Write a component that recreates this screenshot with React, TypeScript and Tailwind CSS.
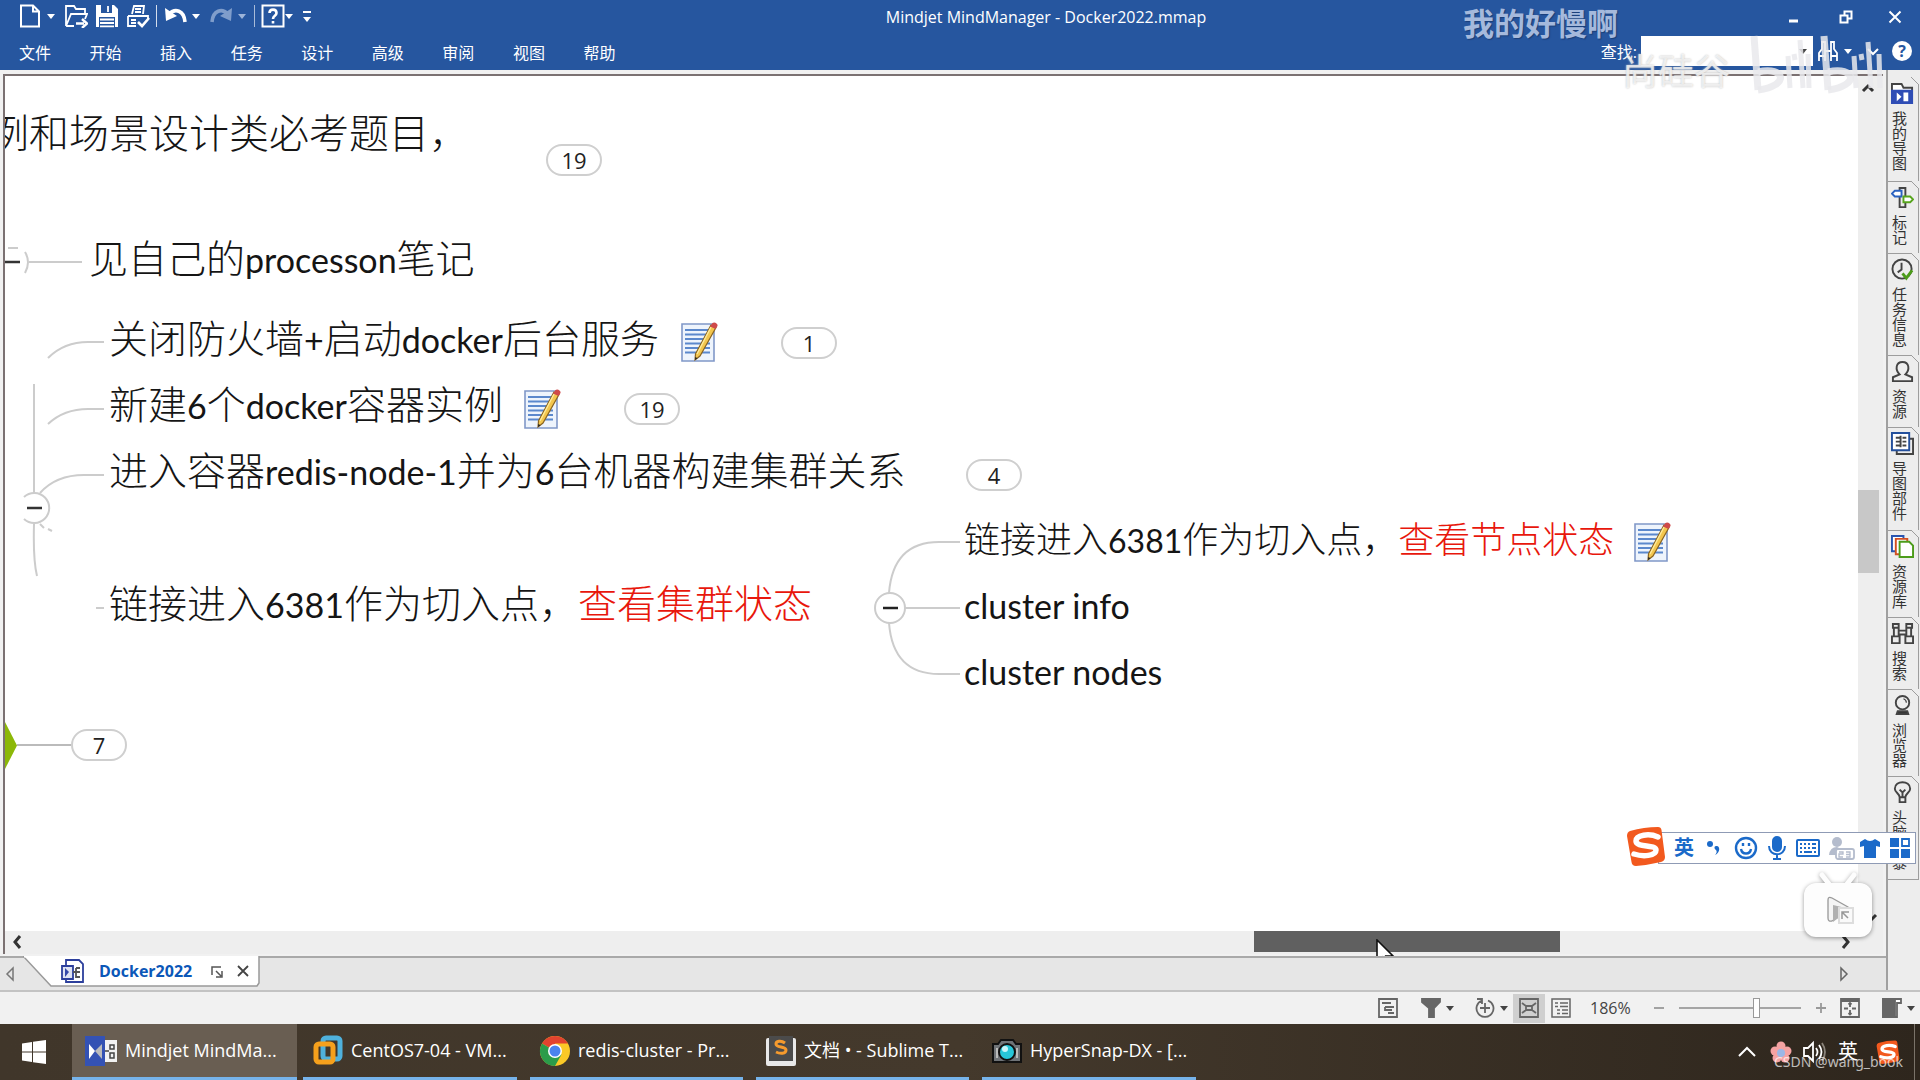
import type { ReactNode } from 'react';

const ui = "font-['Open_Sans','Noto_Sans_CJK_SC',sans-serif]";

const Caret = ({ className = '' }: { className?: string }) => (
  <svg className={`h-[5px] w-2 shrink-0 ${className}`} viewBox="0 0 8 5" fill="currentColor">
    <path d="M0 0h8L4 5z" />
  </svg>
);

const CaretButton = ({ label, className = '' }: { label: string; className?: string }) => (
  <button type="button" aria-label={label} className={`flex h-6 w-2 items-center ${className}`}>
    <Caret />
  </button>
);

type IconProps = { children: ReactNode; label: string; className?: string };

const IconButton = ({ children, label, className = '' }: IconProps) => (
  <button type="button" aria-label={label} className={`h-6 w-6 shrink-0 ${className}`}>
    <svg viewBox="0 0 24 24" className="h-6 w-6" fill="none" stroke="currentColor" strokeWidth="2">
      {children}
    </svg>
  </button>
);

const QuickAccess = () => (
  <div className="flex items-center pl-[18px]">
    <IconButton label="新建">
      <path d="M3 1.500h12l6 6v15H3zM15 1.500v6h6" />
    </IconButton>
    <CaretButton label="新建选项" className="ml-[5px]" />
    <IconButton label="打开" className="ml-[9px]">
      <path d="M2 22V2h8l2 3h9v5M2 22l5-12h16l-2 5M2 22h8" strokeWidth="1.800" />
      <path d="M12 19.500h8M18 15l5 4.500-5 4.500" strokeWidth="2.400" />
    </IconButton>
    <IconButton label="保存" className="ml-[7px]">
      <path d="M1 1h18l4 4v18H1z" fill="currentColor" stroke="none" />
      <path d="M6 1h11v8H6zM4 13h16v10H4z" fill="#26569f" stroke="none" />
      <path d="M13 2v6M5 15.500h14M5 19h14M5 22.300h14" strokeWidth="1.800" />
    </IconButton>
    <IconButton label="打印" className="ml-[7px]">
      <path d="M6 10l2-8h10l-1 8M9 5h6M9 8h6M2 12h20v3M2 12v10h8M5 16h5M5 19h5" strokeWidth="1.800" />
      <path d="M12 18l4 4 7-8" strokeWidth="2.600" />
    </IconButton>
    <span className="ml-[6px] h-[22px] w-px bg-white/80" />
    <IconButton label="撤销" className="ml-[7px]">
      <path d="M5 10c6-6 15-4 16 8" strokeWidth="3.600" />
      <path d="M1 4l1 13 11-5z" fill="currentColor" stroke="none" />
    </IconButton>
    <CaretButton label="撤销选项" className="ml-1" />
    <IconButton label="恢复" className="ml-[9px] text-[#7f9dcb]">
      <path d="M19 10C13 4 4 6 3 18" strokeWidth="3.600" />
      <path d="M23 4l-1 13-11-5z" fill="currentColor" stroke="none" />
    </IconButton>
    <CaretButton label="恢复选项" className="ml-[5px] text-[#9db4d9]" />
    <span className="ml-2 h-[22px] w-px bg-white/60" />
    <IconButton label="帮助主题" className="ml-[6px]">
      <path d="M1.500 1.500h21v21h-21z" />
      <path d="M8.500 9c0-4.500 7-4.500 7 0 0 3-3.500 2.500-3.500 6M12 17v2.500" strokeWidth="2.600" />
    </IconButton>
    <CaretButton label="帮助选项" />
    <button type="button" aria-label="自定义工具栏" className="ml-[10px] flex w-2 flex-col items-center gap-1">
      <span className="h-[2px] w-2 bg-white" />
      <Caret />
    </button>
  </div>
);

const menus = ['文件', '开始', '插入', '任务', '设计', '高级', '审阅', '视图', '帮助'];

const Header = () => (
  <header className="relative bg-[#26569f] text-white">
    <div className="flex h-8 items-center">
      <QuickAccess />
      <h1 className="flex-1 pt-[2px] text-center text-[16px] leading-6">Mindjet MindManager - Docker2022.mmap</h1>
      <div className="flex pt-[2px] pr-[13px]">
        <IconButton label="最小化">
          <path d="M8 16h9" strokeWidth="3" />
        </IconButton>
        <IconButton label="还原" className="ml-[29px]">
          <path d="M6.500 10.500h7v7h-7zM10.500 10V6.500h7v7H14" />
        </IconButton>
        <IconButton label="关闭" className="ml-[25px]">
          <path d="M6.500 6.500l11 11M17.500 6.500l-11 11" />
        </IconButton>
      </div>
    </div>
    <div className="flex h-[38px] items-center justify-between">
      <nav className="grid w-[654px] grid-cols-9 pt-[3px] pl-[19px] text-[16px] leading-5">
        {menus.map((menu) => (
          <button key={menu} type="button" className="text-left">
            {menu}
          </button>
        ))}
      </nav>
      <div className="flex items-center pr-2">
        <label htmlFor="find" className="pt-[2px] text-[16px] leading-5">
          查找:
        </label>
        <div className="ml-1 flex h-[30px] w-[172px] items-center bg-white pr-[6px] text-[#444]">
          <input id="find" type="text" className="w-full min-w-0 flex-1 px-1 text-[14px] outline-none" />
          <CaretButton label="查找历史" />
        </div>
        <IconButton label="查找选项" className="ml-[3px]">
          <path d="M3 22v-8l3-4V3h3v19M21 22v-8l-3-4V3h-3v19M9 12h6M3 17h6M15 17h6" strokeWidth="1.800" />
        </IconButton>
        <CaretButton label="查找更多" className="ml-1" />
        <IconButton label="折叠功能区" className="ml-[10px]">
          <path d="M6 10l5 5 5-5" />
        </IconButton>
        <button
          type="button"
          aria-label="帮助"
          className="ml-[6px] h-5 w-5 rounded-full bg-white text-center text-[16px] leading-5 font-bold text-[#26569f]"
        >
          ?
        </button>
      </div>
    </div>
    <p className="absolute top-0 right-[302px] text-[31px] leading-[46px] font-bold text-[#a5b9dc] [text-shadow:1px_1px_1px_#1b3f78]">
      我的好慢啊
    </p>
  </header>
);

const Watermark = () => (
  <div className="pointer-events-none absolute top-8 right-[34px] z-10 flex items-end gap-4">
    <p className="pb-1 text-[36px] leading-[40px] text-white/70 [text-shadow:0_0_2px_#bbb]">尚硅谷</p>
    <svg className="h-16 w-[140px]" viewBox="0 0 140 64" fill="none" stroke="#e9e9ec" strokeOpacity="0.85">
      <path d="M8 4l4 54" strokeWidth="7" />
      <path d="M12 40c28-6 32 14 0 18" strokeWidth="7" />
      <path d="M42 24l2 32M54 8l3 48M48 22l1 6M62 22l1 34" strokeWidth="5" />
      <path d="M78 4l4 54" strokeWidth="7" />
      <path d="M82 40c28-6 32 14 0 18" strokeWidth="7" />
      <path d="M108 24l2 32M122 10l3 46M115 22l1 6M133 22l1 34" strokeWidth="5" />
    </svg>
  </div>
);

const NoteIcon = ({ className }: { className: string }) => (
  <svg className={`absolute h-10 w-[37px] ${className}`} viewBox="0 0 37 40" fill="none">
    <path d="M1 2h32v37H1z" fill="#eef4fc" stroke="#8098c8" strokeWidth="1.600" />
    <path d="M4 8h25M4 12.500h25M4 17h25M4 21.500h25M4 26h25M4 30.500h25" stroke="#5b88cc" strokeWidth="1.800" />
    <path d="M30 3l5 2.500L19 34l-5 4 .5-6z" fill="#f3c64e" stroke="#8a6420" strokeWidth="1.200" />
    <path d="M30 5L16 32" stroke="#fdeb9c" strokeWidth="1.400" />
    <path d="M29 4.500l2.500-3.500c2-1.500 5.500.5 5 3L34.500 7z" fill="#cf4a4a" />
    <path d="M14.300 35L14 38l2.500-1.800z" fill="#222" />
  </svg>
);

const Badge = ({ count, className }: { count: number; className: string }) => (
  <button
    type="button"
    className={`absolute h-8 w-14 rounded-full border-2 border-[#cfcfcf] bg-white text-center font-['Open_Sans',sans-serif] text-[22px] leading-[26px] text-[#222] ${className}`}
  >
    {count}
  </button>
);

const Topic = ({ children, className }: { children: ReactNode; className: string }) => (
  <p className={`absolute h-12 leading-[48px] font-light whitespace-nowrap text-[#151515] ${className}`}>{children}</p>
);

const Latin = ({ children }: { children: string }) => <span className="text-[34px] font-normal">{children}</span>;

const Connectors = () => (
  <svg className="absolute top-0 left-0 h-[780px] w-[1000px]" viewBox="5 76 1000 780" fill="none" stroke="#cccccc" strokeWidth="2">
    <path d="M8 248h10M25 252q6 10 0 21M29 262h53" />
    <path d="M5 262h15" stroke="#333" strokeWidth="2.500" />
    <path d="M48 358q16-16 40-16h16M48 424q16-15 40-15h16M40 493q16-18 44-18h20" />
    <path d="M34 384v109M34 524q-1 36 3 52M40 524l4 4M48 529l4 2M96 608h8" />
    <path d="M24 497a15 15 0 1 1 0 22" />
    <path d="M27 508h15" stroke="#333" strokeWidth="2.500" />
    <path d="M889 593q4-51 50-51h21M905 608h55M889 623q4 51 50 51h21" />
    <circle cx="890" cy="608" r="15" fill="#fff" />
    <path d="M883 608h15" stroke="#222" strokeWidth="2.500" />
    <path d="M17 745h54" stroke="#bbb" />
    <path d="M5 722l12 23.500L5 769z" fill="#8cb808" stroke="none" />
  </svg>
);

const MapCanvas = () => (
  <section className="relative min-h-[760px] min-w-0 flex-1 overflow-hidden bg-white font-['Lato','Noto_Sans_CJK_SC',sans-serif] text-[39px]">
    <Connectors />
    <Topic className="top-[33px] -left-4 text-[40px]">例和场景设计类必考题目，</Topic>
    <Badge count={19} className="top-[68px] left-[541px]" />
    <Topic className="top-[158px] left-[84px]">
      见自己的<Latin>processon</Latin>笔记
    </Topic>
    <Topic className="top-[238px] left-[104px]">
      关闭防火墙<Latin>+</Latin>启动<Latin>docker</Latin>后台服务
    </Topic>
    <NoteIcon className="top-[246px] left-[676px]" />
    <Badge count={1} className="top-[251px] left-[776px]" />
    <Topic className="top-[304px] left-[104px]">
      新建<Latin>6</Latin>个<Latin>docker</Latin>容器实例
    </Topic>
    <NoteIcon className="top-[313px] left-[519px]" />
    <Badge count={19} className="top-[317px] left-[619px]" />
    <Topic className="top-[370px] left-[104px]">
      进入容器<Latin>redis-node-1</Latin>并为<Latin>6</Latin>台机器构建集群关系
    </Topic>
    <Badge count={4} className="top-[383px] left-[961px]" />
    <Topic className="top-[503px] left-[104px]">
      链接进入<Latin>6381</Latin>作为切入点，<span className="text-[#e8170c]">查看集群状态</span>
    </Topic>
    <Topic className="top-[439px] left-[959px] text-[36px]">
      链接进入<span className="text-[32px] font-normal">6381</span>作为切入点，
      <span className="text-[#e8170c]">查看节点状态</span>
    </Topic>
    <NoteIcon className="top-[446px] left-[1629px]" />
    <Topic className="top-[504px] left-[959px]">
      <Latin>cluster info</Latin>
    </Topic>
    <Topic className="top-[570px] left-[959px]">
      <Latin>cluster nodes</Latin>
    </Topic>
    <Badge count={7} className="top-[653px] left-[66px]" />
  </section>
);

const Arrow = ({ d, label }: { d: string; label: string }) => (
  <button type="button" aria-label={label} className="h-[22px] w-6 shrink-0">
    <svg className="h-[22px] w-6" viewBox="0 0 24 22" fill="none" stroke="#333" strokeWidth="3">
      <path d={d} />
    </svg>
  </button>
);

const VerticalScroll = () => (
  <div className="flex w-[25px] flex-col bg-[#eeeeee]">
    <Arrow label="向上滚动" d="M5 15l5-5 5 5" />
    <div className="flex-[392]" />
    <div className="h-[83px] w-[21px] bg-[#c8c8c8]" />
    <div className="flex-[336]" />
    <Arrow label="向下滚动" d="M8 6l5 5 5-5" />
  </div>
);

const HorizontalScroll = () => (
  <div className="flex h-[23px] items-start bg-[#eeeeee]">
    <Arrow label="向左滚动" d="M15 5l-5 6 5 6" />
    <div className="flex-[1223]" />
    <div className="relative h-[21px] w-[306px] bg-[#606060]">
      <svg className="absolute top-2 left-[122px] h-7 w-5" viewBox="0 0 20 28">
        <path d="M1 1v21l5-4 4 9 4-2-4-8h7z" fill="#fff" stroke="#111" strokeWidth="1.600" />
      </svg>
    </div>
    <div className="flex-[273]" />
    <Arrow label="向右滚动" d="M10 5l5 6-5 6" />
    <div className="w-[26px]" />
  </div>
);

const DocumentTabs = () => (
  <div className="relative flex h-[34px] border-t-2 border-[#a9a9a9] bg-[#e6e6e6]">
    <button type="button" aria-label="上一个标签" className="w-[23px]">
      <svg className="ml-1 h-4 w-3" viewBox="0 0 12 16" fill="none" stroke="#777" strokeWidth="1.500">
        <path d="M9 2v12L3 8z" />
      </svg>
    </button>
    <div className="relative -mt-[2px] flex h-[29px] w-[237px] items-center">
      <svg className="absolute top-0 left-0 h-[31px] w-[237px]" viewBox="0 0 237 31">
        <path d="M0 0l28 30h206l2-3V0" fill="#fff" stroke="#999" strokeWidth="1.500" />
        <path d="M1 0h234" stroke="#fff" strokeWidth="3" />
      </svg>
      <svg className="relative ml-[38px] h-6 w-6" viewBox="0 0 24 24" fill="none" stroke="#2c3f9c" strokeWidth="1.800">
        <path d="M5 7V1h13l4 4v18H5v-3" />
        <path d="M1 7h11v13H1z" fill="#dfe3f2" />
        <path d="M4 9l4 4-4 5z" fill="#3448a8" stroke="none" />
        <path d="M12 13h3M15 9h4M15 9v9h4M15 13h4" stroke="#555" />
      </svg>
      <a href="#docker2022" className="relative ml-[14px] text-[16px] leading-6 font-bold text-[#0b57b8]">
        Docker2022
      </a>
      <button type="button" aria-label="弹出" className="absolute top-[10px] left-[188px]">
        <svg className="h-3 w-3" viewBox="0 0 12 12" fill="none" stroke="#555" strokeWidth="1.500">
          <path d="M1 9V1h9M5 5l5 5M11 5v6H5" />
        </svg>
      </button>
      <button type="button" aria-label="关闭标签" className="absolute top-[9px] left-[214px]">
        <svg className="h-3 w-3" viewBox="0 0 12 12" stroke="#444" strokeWidth="1.800">
          <path d="M1 1l10 10M11 1L1 11" />
        </svg>
      </button>
    </div>
    <button type="button" aria-label="下一个标签" className="mr-9 ml-auto">
      <svg className="h-4 w-3" viewBox="0 0 12 16" fill="none" stroke="#666" strokeWidth="1.500">
        <path d="M3 2v12l6-6z" />
      </svg>
    </button>
  </div>
);

const sideTabs: { label: string; height: string; icon: ReactNode }[] = [
  {
    label: '我的导图',
    height: 'h-[104px]',
    icon: (
      <>
        <path d="M1 22V2h10l2 4h9v16z" fill="#fff" />
        <path d="M1 9h21v13H1z" fill="#2f4db5" stroke="#2f4db5" />
        <path d="M6 11v9l5-4.500zM13 11h5v9h-5z" fill="#fff" stroke="none" />
      </>
    ),
  },
  {
    label: '标记',
    height: 'h-[72px]',
    icon: (
      <>
        <path d="M9 2h6v20H9z" />
        <path d="M1 8l3-3h7v6H4z" fill="#fff" stroke="#2a62c0" />
        <path d="M23 14l-3-3h-7v6h7z" fill="#fff" stroke="#57a51d" />
      </>
    ),
  },
  {
    label: '任务信息',
    height: 'h-[102px]',
    icon: (
      <>
        <circle cx="11.500" cy="11.500" r="10" />
        <path d="M11 5v7l-4 3" />
        <path d="M12 16l4 5 6-8" stroke="#4c9c1a" strokeWidth="3" />
      </>
    ),
  },
  {
    label: '资源',
    height: 'h-[72px]',
    icon: <path d="M2 22v-4l7-3c-5-5-4-13 3-13s8 8 3 13l7 3v4z" />,
  },
  {
    label: '导图部件',
    height: 'h-[103px]',
    icon: (
      <>
        <path d="M19 7h4v16H6v-4" />
        <path d="M1 1h18v18H1z" fill="#fff" stroke="#24509c" />
        <path d="M5 6h4M5 10h4M5 14h4M12 6h4M12 10h4M12 14h4M10 4v12" />
      </>
    ),
  },
  {
    label: '资源库',
    height: 'h-[87px]',
    icon: (
      <>
        <path d="M1 1h12v16H1z" fill="#fff" stroke="#2a55b0" />
        <path d="M5 4h12v16H5z" fill="#fff" stroke="#d24f22" />
        <path d="M9 7h10l4 4v12H9z" fill="#fff" stroke="#4c9c1a" />
      </>
    ),
  },
  {
    label: '搜索',
    height: 'h-[72px]',
    icon: <path d="M2 2h6v4H2zM16 2h6v4h-6zM3 6v9M8 6v9M16 6v9M21 6v9M1 15h8v7H1zM15 15h8v7h-8zM8 9h8M8 13h8" />,
  },
  {
    label: '浏览器',
    height: 'h-[87px]',
    icon: (
      <>
        <circle cx="12" cy="9" r="7" />
        <path d="M13 5q3 1 3 4" strokeWidth="1.200" />
        <path d="M7 18h10l1 3H6z" fill="#333" />
      </>
    ),
  },
  {
    label: '头脑风暴',
    height: 'h-[103px]',
    icon: <path d="M9 17c0-4-5-5-5-9 0-9 16-9 16 0 0 4-5 5-5 9zM9 17v5h6v-5M9 9l3 3 3-3M12 12v5" />,
  },
];

const SidePanel = () => (
  <aside className="w-[34px] shrink-0 border-l-2 border-[#a0a0a0] bg-[#ededed] pt-2">
    {sideTabs.map(({ label, height, icon }) => (
      <button
        key={label}
        type="button"
        className={`relative flex w-[31px] flex-col items-start gap-[6px] border-r border-b border-[#9d9d9d] pt-1 pl-[3px] ${height}`}
      >
        <svg className="h-[23px] w-[23px] shrink-0" viewBox="0 0 24 24" fill="none" stroke="#444" strokeWidth="2">
          {icon}
        </svg>
        <span className="text-[15px] leading-[16px] text-[#333] [writing-mode:vertical-rl]">{label}</span>
        <svg className="absolute -top-px -right-px h-2 w-2" viewBox="0 0 8 8">
          <path d="M0 0h8v8z" fill="#ededed" />
          <path d="M0 0l8 8" stroke="#9d9d9d" />
        </svg>
      </button>
    ))}
  </aside>
);

const SogouMark = ({ className }: { className: string }) => (
  <svg className={className} viewBox="0 0 40 40">
    <path d="M4 5q14-4 28-4 3 0 3.500 3L39 31q0 4-4 5-13 3-25 4-4 0-4.500-4L1 10q0-4 3-5z" fill="#f2591e" />
    <path
      d="M32 11c-9-4-22-2-22 4 0 7 20 3 20 9 0 6-13 7-22 4"
      fill="none"
      stroke="#fff"
      strokeWidth="5.500"
      strokeLinecap="round"
    />
  </svg>
);

const InputMethodBar = () => (
  <div className="absolute right-1 bottom-[126px] z-20 flex h-8 w-[258px] items-center border border-[#8f9bb5] bg-white pl-[15px] text-[#1b6ac9]">
    <SogouMark className="absolute -top-[7px] -left-[33px] h-10 w-10" />
    <span className="text-[20px] leading-6 font-bold">英</span>
    <svg className="ml-3 h-6 w-4" viewBox="0 0 16 24" fill="currentColor">
      <circle cx="4" cy="8" r="3" />
      <path d="M10 10c4-1 5 6-1 9 2-2 2-4 1-5-2-1-2-4 0-4z" />
    </svg>
    <svg className="ml-3 h-6 w-6" viewBox="0 0 24 24" fill="none" stroke="currentColor" strokeWidth="2.400">
      <circle cx="12" cy="12" r="10" />
      <path d="M7 13c1 6 9 6 10 0M9 7v3M15 7v3" />
    </svg>
    <svg className="ml-[7px] h-6 w-6" viewBox="0 0 24 24" fill="none" stroke="currentColor" strokeWidth="2">
      <rect x="8" y="1" width="8" height="14" rx="4" fill="currentColor" />
      <path d="M4 10c0 11 16 11 16 0M12 18v5M8 23h8" />
    </svg>
    <svg className="ml-[7px] h-6 w-6" viewBox="0 0 24 24" fill="none" stroke="currentColor" strokeWidth="2">
      <rect x="1" y="4" width="22" height="16" rx="1" />
      <path d="M4 8h2M8 8h2M12 8h2M16 8h4M4 12h2M8 12h2M12 12h2M16 12h4M4 16h2M8 16h8M18 16h2" />
    </svg>
    <svg className="ml-2 h-6 w-7 text-[#b4bccd]" viewBox="0 0 28 24" fill="none" stroke="currentColor" strokeWidth="1.800">
      <circle cx="9" cy="6" r="5" fill="currentColor" stroke="none" />
      <path d="M1 19q1-8 8-8l4 2-4 6z" fill="currentColor" stroke="none" />
      <rect x="8" y="13" width="18" height="10" rx="2" fill="#fff" />
      <path d="M11 16h4v2h-4v3h4M18 16h4v5h-4M18 18.500h4" strokeWidth="1.300" />
    </svg>
    <svg className="ml-[3px] h-[22px] w-[22px]" viewBox="0 0 22 22" fill="currentColor">
      <path d="M6 2q5 4 10 0l5 3v5l-4-1v12H5V9l-4 1V5z" />
    </svg>
    <svg className="ml-[9px] h-5 w-5" viewBox="0 0 20 20" fill="currentColor">
      <path d="M0 0h9v9H0zM0 11h9v9H0zM11 11h9v9h-9z" />
      <path d="M12 1h7v7h-7z" fill="none" stroke="currentColor" strokeWidth="1.800" />
    </svg>
  </div>
);

const PlayerMark = () => (
  <svg className="absolute right-[46px] bottom-[50px] z-20 h-[68px] w-[72px] drop-shadow-[0_1px_2px_#0006]" viewBox="0 0 72 68">
    <path d="M20 3l7 9M52 3l-7 9" stroke="#fdfdfd" strokeWidth="5" strokeLinecap="round" />
    <rect x="2" y="11" width="68" height="54" rx="12" fill="#fdfdfd" />
    <path d="M26 28q0-4 4-2l16 9q3 2 0 4l-16 10q-4 1-4-3z" fill="#f4f4f4" stroke="#999" strokeWidth="1.300" />
    <path d="M31 33l17 4-17 13z" fill="#b0b0b0" />
    <path d="M37 36h14v15H37z" fill="#fafafa" stroke="#ddd" strokeWidth="2" />
    <path d="M40 47v-7h7M40 40l6 6" stroke="#999" fill="none" strokeWidth="1.500" />
  </svg>
);

const StatusIcon = ({ children, label, className = '' }: IconProps) => (
  <button type="button" aria-label={label} className={`flex h-[29px] shrink-0 items-center justify-center ${className}`}>
    <svg className="h-5 w-5" viewBox="0 0 20 20" fill="none" stroke="#666" strokeWidth="1.800">
      {children}
    </svg>
  </button>
);

const StatusBar = () => (
  <footer className="flex h-[34px] items-center justify-end border-t-2 border-[#c3c3c3] bg-[#f1f1f1] pr-[5px] text-[#444]">
    <StatusIcon label="大纲" className="w-5">
      <path d="M1 1h18v18H1zM4 5h9M7 9h9M7 9v3h7M10 15h6" />
    </StatusIcon>
    <StatusIcon label="筛选" className="ml-[23px] w-5">
      <path d="M1 1h18v3l-6 6v9H8v-9L1 4z" fill="#666" />
    </StatusIcon>
    <CaretButton label="筛选选项" className="ml-[5px]" />
    <StatusIcon label="显示详细" className="ml-[21px] w-5">
      <path d="M7 2.500a8.500 8.500 0 1 0 6 0M2 1h5v5M10 5v10M5 10h10" />
    </StatusIcon>
    <CaretButton label="显示选项" className="ml-[5px]" />
    <StatusIcon label="导图视图" className="ml-[5px] w-8 bg-[#cfcfcf]">
      <path d="M1 1h18v18H1zM7 8h6v4H7zM3 5l4 3M17 5l-4 3M3 15l4-3M17 15l-4-3" />
    </StatusIcon>
    <StatusIcon label="大纲视图" className="ml-[6px] w-5">
      <path d="M1 1h18v18H1zM4 5h3M9 5h8M4 8.500h3M9 8.500h8M6 12h3M11 12h6M6 15.500h3M11 15.500h6" strokeWidth="1.500" />
    </StatusIcon>
    <span className="mr-[2px] ml-[19px] w-10 text-[16px] leading-6">186%</span>
    <StatusIcon label="缩小" className="ml-[17px] w-5">
      <path d="M5 10h10" stroke="#999" />
    </StatusIcon>
    <input
      type="range"
      aria-label="缩放"
      defaultValue={64}
      className="ml-[10px] h-5 w-[122px] appearance-none bg-[linear-gradient(#a5a5a5,#a5a5a5)] bg-[length:100%_2px] bg-center bg-no-repeat [&::-webkit-slider-thumb]:h-5 [&::-webkit-slider-thumb]:w-[7px] [&::-webkit-slider-thumb]:appearance-none [&::-webkit-slider-thumb]:border [&::-webkit-slider-thumb]:border-[#999] [&::-webkit-slider-thumb]:bg-white"
    />
    <StatusIcon label="放大" className="ml-[10px] w-5">
      <path d="M5 10h10M10 5v10" stroke="#999" />
    </StatusIcon>
    <StatusIcon label="适合窗口" className="ml-[9px] w-5">
      <path d="M1 1h18v18H1zM1 3h18M10 5v4M10 12v4M4 10.500h4M12 10.500h4M8.500 6.500L10 5l1.500 1.500M8.500 15l1.500 1.500 1.500-1.500" />
    </StatusIcon>
    <StatusIcon label="任务窗格" className="ml-[22px] w-5">
      <path d="M1 1h18v4h-4v14H1z" fill="#fff" />
      <path d="M1 1h12v18H1z" fill="#666" />
    </StatusIcon>
    <CaretButton label="窗格选项" className="ml-[5px]" />
  </footer>
);

const tasks: { title: string; width: string; icon: ReactNode }[] = [
  {
    title: 'CentOS7-04 - VM...',
    width: 'w-[214px] ml-[6px]',
    icon: (
      <>
        <rect x="11" y="3" width="17" height="21" rx="3" fill="none" stroke="#4fb1dc" strokeWidth="5" />
        <rect x="4" y="9" width="17" height="18" rx="3" fill="none" stroke="#f5a01c" strokeWidth="5" />
      </>
    ),
  },
  {
    title: 'redis-cluster - Pr...',
    width: 'w-[213px] ml-[13px]',
    icon: (
      <>
        <circle cx="16" cy="16" r="15" fill="#fbc927" />
        <path d="M16 16L3 8.500A15 15 0 0 1 29 8.500H16z" fill="#e2432f" />
        <path d="M3 8.500A15 15 0 0 0 16 31l6.500-11.500L16 16z" fill="#2b9c4a" />
        <circle cx="16" cy="16" r="7" fill="#fff" />
        <circle cx="16" cy="16" r="5.500" fill="#4a83ee" />
      </>
    ),
  },
  {
    title: '文档 • - Sublime T...',
    width: 'w-[213px] ml-[13px]',
    icon: (
      <>
        <rect x="1" y="3" width="30" height="28" rx="2" fill="#e8e8e8" />
        <path d="M4 1h24v25H4z" fill="#4b4b4b" />
        <path d="M20 8c-4-3-9-2-9 1 0 4 10 2 10 6 0 4-6 4-10 2" fill="none" stroke="#f59a2d" strokeWidth="3" />
      </>
    ),
  },
  {
    title: 'HyperSnap-DX - [...',
    width: 'w-[214px] ml-[13px]',
    icon: (
      <>
        <path d="M2 9h5l3-4h12l3 4h5v18H2z" fill="#6f7377" stroke="#111" strokeWidth="2" />
        <path d="M6 13v10M26 13v10" stroke="#bbb" strokeWidth="2" />
        <circle cx="16" cy="17" r="8" fill="#27c6d8" stroke="#111" strokeWidth="2" />
        <circle cx="14" cy="14" r="3" fill="#c9f6fa" />
      </>
    ),
  },
];

const Taskbar = () => (
  <nav className="relative flex h-14 items-stretch bg-linear-to-r from-[#40362a] via-[#44392c] to-[#2e261d] text-[18px] text-white">
    <button type="button" aria-label="开始" className="flex w-[72px] items-center justify-center">
      <svg className="-ml-1 h-6 w-6" viewBox="0 0 24 24" fill="#fff">
        <path d="M0 3.500l10-1.500v9.500H0zM11 1.800L24 0v11.500H11zM0 12.500h10V22L0 20.500zM11 12.500h13V24l-13-1.800z" />
      </svg>
    </button>
    <button
      type="button"
      className="flex w-[225px] items-center border-b-[3px] border-[#76b3ea] bg-[#695e52] pl-[13px] whitespace-nowrap"
    >
      <svg className="h-8 w-8" viewBox="0 0 32 32">
        <path d="M0 1h20v30H0z" fill="#3452b4" />
        <path d="M20 5h12v22H20z" fill="#f2f2f2" />
        <path d="M4 9l6 7-6 8z" fill="#fff" />
        <path d="M17 9l-7 7 7 8z" fill="#bbb" />
        <path d="M20 16h4M25 10h4v4h-4zM25 18h4v5h-4z" fill="none" stroke="#444" strokeWidth="1.500" />
      </svg>
      <span className="ml-2">Mindjet MindMa...</span>
    </button>
    {tasks.map(({ title, width, icon }) => (
      <button
        key={title}
        type="button"
        className={`flex items-center border-b-[3px] border-[#76b3ea] pl-[9px] whitespace-nowrap ${width}`}
      >
        <svg className="h-8 w-8" viewBox="0 0 32 32">
          {icon}
        </svg>
        <span className="ml-[7px]">{title}</span>
      </button>
    ))}
    <div className="mr-[5px] ml-auto flex items-center border-r border-[#7a7369] pr-[14px]">
      <svg className="h-4 w-5" viewBox="0 0 20 16" fill="none" stroke="#fff" strokeWidth="2">
        <path d="M2 12l8-8 8 8" />
      </svg>
      <svg className="ml-[13px] h-[22px] w-[22px]" viewBox="0 0 22 22" fill="#f5a3a3">
        <circle cx="11" cy="5" r="4.500" />
        <circle cx="5" cy="10" r="4.500" />
        <circle cx="17" cy="10" r="4.500" />
        <circle cx="7" cy="17" r="4.500" />
        <circle cx="15" cy="17" r="4.500" />
        <circle cx="11" cy="12" r="4" fill="#9bb7e6" />
      </svg>
      <svg className="ml-[10px] h-6 w-6" viewBox="0 0 24 24" fill="none" stroke="#fff" strokeWidth="1.800">
        <path d="M2 8h4l5-5v18l-5-5H2zM14 8q3 4 0 8M17 5q5 7 0 14" />
        <path d="M20 3q6 9 0 18" stroke="#8b847b" />
      </svg>
      <span className="ml-[12px] text-[20px] leading-6">英</span>
      <SogouMark className="ml-[18px] h-6 w-6" />
    </div>
    <p className="absolute right-[17px] bottom-2 font-['Noto_Sans',sans-serif] text-[14px] leading-5 text-white/70">
      CSDN @wang_book
    </p>
  </nav>
);

export default function App() {
  return (
    <div className={`relative flex min-h-screen flex-col overflow-hidden bg-[#f1f1f1] ${ui}`}>
      <Header />
      <Watermark />
      <main className="relative flex flex-1">
        <div className="flex min-w-0 flex-1 flex-col">
          <div className="mx-[3px] mt-1 mb-[2px] flex flex-1 flex-col border-t-2 border-l-2 border-[#7b7172]">
            <div className="flex flex-1">
              <MapCanvas />
              <VerticalScroll />
            </div>
            <HorizontalScroll />
          </div>
          <DocumentTabs />
        </div>
        <SidePanel />
        <InputMethodBar />
        <PlayerMark />
      </main>
      <StatusBar />
      <Taskbar />
    </div>
  );
}
